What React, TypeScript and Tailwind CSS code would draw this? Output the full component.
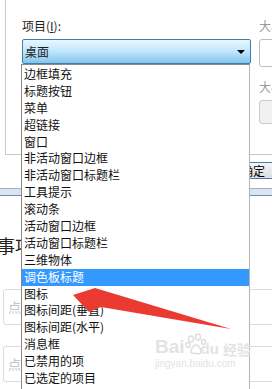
const items = [
  "边框填充",
  "标题按钮",
  "菜单",
  "超链接",
  "窗口",
  "非活动窗口边框",
  "非活动窗口标题栏",
  "工具提示",
  "滚动条",
  "活动窗口边框",
  "活动窗口标题栏",
  "三维物体",
  "调色板标题",
  "图标",
  "图标间距(垂直)",
  "图标间距(水平)",
  "消息框",
  "已禁用的项",
  "已选定的项目",
];

const selected = "调色板标题";

export default function App() {
  return (
    <div className="relative h-[389px] w-[272px] overflow-hidden bg-white font-['Noto_Sans_CJK_SC',sans-serif] text-[12px] text-[#1e1e1e]">
      {/* window colour dialog behind the list */}
      <div className="ml-[5px] flex h-[155px] border-b border-l border-[#c8c8c8] pl-[16px] pt-[19px]">
        <div className="w-[229px] shrink-0">
          <div className="leading-[14px]">
            项目(<span className="underline">I</span>):
          </div>
          <div className="mt-[6px] flex h-[25px] items-center justify-between rounded-[2px] border border-[#3c7fb1] bg-gradient-to-b from-[#eaf6fd] via-[#bee6fd] to-[#86c4ec] pl-[2px] pr-[5px] leading-[14px]">
            <span>桌面</span>
            <span className="h-0 w-0 border-x-[4px] border-t-[4px] border-x-transparent border-t-black" />
          </div>
        </div>
        <div className="ml-[8px] flex-1 text-[#9a9a9a]">
          <div className="leading-[14px]">大小</div>
          <div className="mt-[6px] h-[28px] w-[60px] rounded-[3px] border border-[#bdbdbd] bg-white" />
          <div className="mt-[13px] leading-[14px]">大小</div>
          <div className="mt-[6px] h-[24px] w-[60px] rounded-[3px] border border-[#cacaca] bg-[#f1f1f1]" />
        </div>
      </div>

      <div className="flex h-[33px] items-start pl-[234px] pt-[7px]">
        <div className="flex h-[17px] w-[60px] shrink-0 items-center border-y border-[#3c7fb1] bg-gradient-to-b from-[#f4f4f4] to-[#dedede] pl-[7px] leading-[14px] text-black">
          确定
        </div>
      </div>
      <div className="h-[8px] border-y border-t-[#b0b0b0] border-b-[#7d8b99] bg-[#d6e6f7]" />

      {/* page underneath */}
      <div className="ml-[-3px] mt-[40px] text-[18px] leading-[18px] text-[#222]">事项</div>
      <div className="ml-[3px] mt-[35px] flex h-[36px] w-[300px] items-center rounded-[3px] border border-[#dcdcdc] pl-[4px] text-[13px] text-[#c4c4c4]">
        点
      </div>
      <div className="ml-[3px] mt-[21px] flex h-[36px] w-[300px] items-center rounded-[3px] border border-[#dcdcdc] pl-[4px] text-[13px] text-[#c4c4c4]">
        点
      </div>

      {/* open dropdown list */}
      <div className="absolute left-[21px] top-[64px] h-[340px] w-[229px] border border-l-[#8a8a8a] border-r-[#b4b4b4] border-t-[#8a8a8a] bg-white pt-[1px]">
        {items.map((it) => (
          <div
            key={it}
            className={`h-[16.9px] pl-[2px] leading-[16.9px] ${
              it === selected ? "bg-[#3399ff] text-white" : "text-[#111]"
            }`}
          >
            {it}
          </div>
        ))}
      </div>

      {/* watermark */}
      <div className="pointer-events-none absolute left-[155px] top-[333px] text-[#e3e3e3]">
        <div className="flex items-end">
          <span className="font-['Liberation_Sans',sans-serif] text-[19px] font-bold leading-[20px]">Bai</span>
          <svg width="22" height="22" viewBox="0 0 22 22" className="mb-[2px]">
            <g fill="none" stroke="#dedede" strokeWidth="1.5">
              <ellipse cx="6" cy="6" rx="2.5" ry="3" />
              <ellipse cx="13" cy="4" rx="2.5" ry="3" />
              <ellipse cx="18.5" cy="9" rx="2" ry="2.5" />
              <ellipse cx="3" cy="12" rx="2" ry="2.5" />
              <path d="M6 19c0-4 3-7 5-7s5 3 5 7c0 2-3 2-5 1.5S6 21 6 19z" />
            </g>
          </svg>
          <span className="ml-[-6px] font-['Liberation_Sans',sans-serif] text-[15px] font-bold leading-[16px]">du</span>
          <span className="ml-[4px] text-[14px] font-bold leading-[16px]">经验</span>
        </div>
        <div className="mt-[1px] font-['Liberation_Sans',sans-serif] text-[10px] leading-[11px]">jingyan.baidu.com</div>
      </div>

      {/* red arrow */}
      <svg className="pointer-events-none absolute left-0 top-0" width="272" height="389" viewBox="0 0 272 389">
        <polygon points="73,295 95,288 231,329 101,307 89,312" fill="#ea3a32" />
      </svg>
    </div>
  );
}
